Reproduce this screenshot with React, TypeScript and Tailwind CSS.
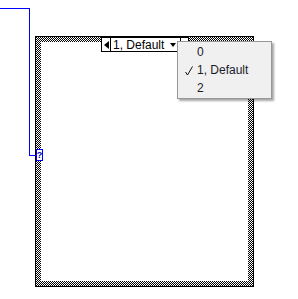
import React from "react";

// 1px checkerboard: vertical stripes XOR horizontal stripes via difference blend
const checker =
  "[background-image:repeating-linear-gradient(90deg,#fff_0_1px,#000_1px_2px),repeating-linear-gradient(0deg,#fff_0_1px,#000_1px_2px)] bg-blend-difference";

function Wire() {
  return (
    <svg className="absolute left-0 top-0" width={298} height={299}>
      <polyline
        points="0,8.5 29.5,8.5 29.5,155.5 36,155.5"
        fill="none"
        stroke="#0000ff"
        strokeWidth={1}
        shapeRendering="crispEdges"
      />
    </svg>
  );
}

function RingControl() {
  return (
    <div className="absolute left-[101px] top-[37px] flex h-[15px] text-[12px] leading-none">
      <div className="flex w-[10px] items-center justify-center border border-black bg-white">
        <div className="h-0 w-0 border-y-[4px] border-r-[5px] border-y-transparent border-r-black" />
      </div>
      <div className="flex w-[70px] items-center justify-between border-y border-r border-black bg-white pl-[2px] pr-[4px]">
        <span className="text-black">1, Default</span>
        <div className="h-0 w-0 border-x-[3px] border-t-[4px] border-x-transparent border-t-black" />
      </div>
      <div className="w-[8px] border-y border-r border-black bg-white" />
    </div>
  );
}

function Menu() {
  const items = ["0", "1, Default", "2"];
  return (
    <div className="absolute left-[177px] top-[41px] w-[95px] border border-[#979797] bg-[#f0f0f0] py-[1px] shadow-[2px_2px_2px_rgba(0,0,0,0.35)] text-[12px] text-[#1a1a2a]">
      {items.map((t, i) => (
        <div key={t} className="relative flex h-[18px] items-center pl-[19px]">
          {i === 1 && (
            <svg className="absolute left-[7px] top-[5px]" width={8} height={10}>
              <path d="M0.5 6 L2.5 9 L7.5 0.5" fill="none" stroke="#111" strokeWidth={1} />
            </svg>
          )}
          {t}
        </div>
      ))}
    </div>
  );
}

export default function App() {
  return (
    <div
      className="relative h-[299px] w-[298px] overflow-hidden bg-white"
      style={{ fontFamily: '"Liberation Sans", Arial, sans-serif' }}
    >
      <div className={`ml-[35px] mt-[36px] h-[251px] w-[219px] border border-black p-[5px] ${checker}`}>
        <div className="h-full w-full bg-white" />
      </div>
      <Wire />
      <div className="absolute left-[36px] top-[149px] flex h-[12px] w-[7px] items-center justify-center border border-[#0000ff] bg-white text-[9px] font-bold leading-none text-[#0000aa]">
        ?
      </div>
      <RingControl />
      <Menu />
    </div>
  );
}
